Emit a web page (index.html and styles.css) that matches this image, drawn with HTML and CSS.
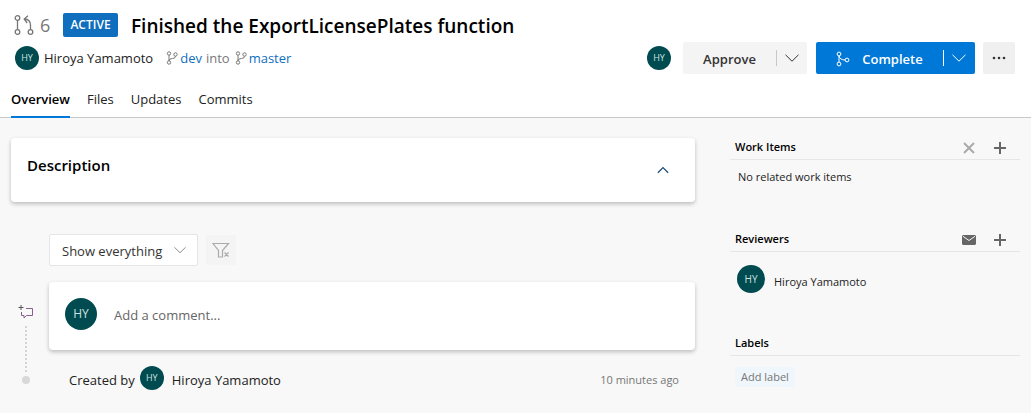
FILE: index.html
```html
<!DOCTYPE html>
<html lang="en">
<head>
<meta charset="utf-8">
<meta name="viewport" content="width=device-width, initial-scale=1">
<title>Pull request 6</title>
<link rel="stylesheet" href="styles.css">
</head>
<body>
<svg class="sprite" aria-hidden="true">
  <symbol id="chevron-down" viewBox="0 0 14 8"><path d="M.5 .8 7 7.2 13.5 .8"/></symbol>
  <symbol id="branch" viewBox="0 0 12 14"><circle cx="3" cy="2.5" r="1.7"/><circle cx="3" cy="11.5" r="1.7"/><circle cx="9.500" cy="3.5" r="1.7"/><path d="M3 4.200v5.600M9.500 5.200Q9.500 7.500 6.500 7.500 3 7.500 3 10"/></symbol>
  <symbol id="plus" viewBox="0 0 12 12"><path d="M6 0v12M0 6h12"/></symbol>
</svg>
<header class="header">
  <div class="header-main">
    <div class="summary">
      <div class="title-row">
        <svg class="icon pr-icon" viewBox="0 0 20 20"><circle cx="3.5" cy="3" r="2.3"/><circle cx="3.5" cy="17" r="2.3"/><circle cx="16.5" cy="17" r="2.3"/><path d="M3.5 5.300v9.400M16.500 14.700V10Q16.500 4.500 10.500 4M14 .8 10.200 4l3 4"/></svg>
        <span class="pr-number">6</span>
        <span class="status">ACTIVE</span>
        <h1 class="title">Finished the ExportLicensePlates function</h1>
      </div>
      <div class="byline">
        <span class="avatar avatar-small">HY</span>
        <span class="author">Hiroya Yamamoto</span>
        <span class="branches"><svg class="icon branch-icon"><use href="#branch"/></svg><a href="#dev">dev</a><span class="into">into</span><svg class="icon branch-icon"><use href="#branch"/></svg><a href="#master">master</a></span>
      </div>
    </div>
    <div class="actions">
      <span class="avatar avatar-small">HY</span>
      <div class="split">
        <button class="split-label" type="button">Approve</button>
        <button class="split-arrow" type="button" aria-label="More approval options"><svg class="icon chevron"><use href="#chevron-down"/></svg></button>
      </div>
      <div class="split split-primary">
        <button class="split-label" type="button"><svg class="icon merge-icon" viewBox="0 0 14 16"><circle cx="3" cy="3" r="1.9"/><circle cx="3" cy="13" r="1.9"/><circle cx="11" cy="9" r="1.9"/><path d="M3 4.900v6.200M3 5Q4 9 9.100 9"/></svg>Complete</button>
        <button class="split-arrow" type="button" aria-label="More completion options"><svg class="icon chevron"><use href="#chevron-down"/></svg></button>
      </div>
      <button class="more" type="button" aria-label="More actions"><svg class="more-icon" viewBox="0 0 14 4"><circle cx="2" cy="2" r="1.3"/><circle cx="7" cy="2" r="1.3"/><circle cx="12" cy="2" r="1.3"/></svg></button>
    </div>
  </div>
  <nav class="tabs">
    <a class="tab tab-active" href="#overview">Overview</a>
    <a class="tab" href="#files">Files</a>
    <a class="tab" href="#updates">Updates</a>
    <a class="tab" href="#commits">Commits</a>
  </nav>
</header>
<div class="content">
  <main class="main">
    <section class="card description">
      <h2 class="description-title">Description</h2>
      <button class="plain collapse" type="button" aria-label="Collapse description"><svg class="icon" viewBox="0 0 14 8"><path d="M1 7.2 7 1.2 13 7.2"/></svg></button>
    </section>
    <div class="filters">
      <label class="filter"><select class="filter-select" aria-label="Filter activity"><option>Show everything</option></select><svg class="icon filter-chevron"><use href="#chevron-down"/></svg></label>
      <button class="clear-filter" type="button" aria-label="Clear filter" disabled><svg class="icon clear-icon" viewBox="0 0 18 16"><path d="M1 1.5h15.5L10.5 8.5V15h-4V8.5zM12.500 10.500l4 4M16.500 10.500l-4 4"/></svg></button>
    </div>
    <div class="timeline">
      <div class="rail">
        <svg class="icon comment-icon" viewBox="0 0 16 14"><path class="comment-plus" d="M3 0v5M.5 2.5h5"/><path d="M8 3.500h6.500v7H8.500L6 13v-2.500H3.500V7"/></svg>
        <span class="rail-line"></span>
        <span class="rail-dot"></span>
      </div>
      <div class="events">
        <div class="card comment">
          <span class="avatar avatar-large">HY</span>
          <input class="comment-input" type="text" placeholder="Add a comment..." aria-label="Add a comment">
        </div>
        <div class="created">
          <span>Created by</span>
          <span class="avatar avatar-small created-avatar">HY</span>
          <span>Hiroya Yamamoto</span>
          <time class="time">10 minutes ago</time>
        </div>
      </div>
    </div>
  </main>
  <aside class="sidebar">
    <section class="panel">
      <div class="panel-head">
        <h3 class="panel-title">Work Items</h3>
        <button class="plain" type="button" aria-label="Remove work items"><svg class="icon remove-icon" viewBox="0 0 12 12"><path d="m1 1 10 10M11 1 1 11"/></svg></button>
        <button class="plain" type="button" aria-label="Add work item"><svg class="icon plus-icon"><use href="#plus"/></svg></button>
      </div>
      <p class="panel-text">No related work items</p>
    </section>
    <section class="panel panel-reviewers">
      <div class="panel-head">
        <h3 class="panel-title">Reviewers</h3>
        <button class="plain" type="button" aria-label="Email reviewers"><svg class="mail-icon" viewBox="0 0 14 10"><path d="M1 0h12l1 1v8l-1 1H1L0 9V1z"/><path class="mail-flap" d="M1 1.300 7 5.500l6-4.200"/></svg></button>
        <button class="plain" type="button" aria-label="Add reviewer"><svg class="icon plus-icon"><use href="#plus"/></svg></button>
      </div>
      <div class="reviewer"><span class="avatar avatar-medium">HY</span><span class="reviewer-name">Hiroya Yamamoto</span></div>
    </section>
    <section class="panel-labels">
      <div class="panel-head"><h3 class="panel-title">Labels</h3></div>
      <button class="add-label" type="button">Add label</button>
    </section>
  </aside>
</div>
</body>
</html>
```
FILE: styles.css
```css
* { box-sizing: border-box; }
html { background: #f8f8f8; }
body { margin: 0; font: 13px/20px "Segoe UI", "Open Sans", sans-serif; color: #222; }
h1, h2, h3, p { margin: 0; font-weight: 600; color: #000; }
a { color: #106ebe; text-decoration: none; }
button { font: inherit; border: 0; padding: 0; cursor: pointer; }
svg { display: block; flex: none; }
.sprite { position: absolute; width: 0; height: 0; }
.icon { fill: none; stroke: currentColor; }

.header { background: #fff; border-bottom: 1px solid #c8c8c8; padding: 11px 16px 0 11px; }
.header-main { display: flex; justify-content: space-between; align-items: flex-end; }
.title-row { display: flex; align-items: center; height: 28px; }
.pr-icon { width: 20px; height: 20px; margin: 0 6px 0 3px; color: #777; stroke-width: 1.3; }
.pr-number { width: 12px; margin-right: 11px; font-size: 18px; color: #777; }
.status { width: 55px; height: 24px; margin-right: 13px; border-radius: 2px; background: #106ebe; color: #fff; font-size: 12px; font-weight: 600; line-height: 24px; text-align: center; }
.title { font-size: 19px; font-weight: 550; line-height: 28px; padding-top: 1px; }
.byline { display: flex; align-items: center; height: 28px; margin-top: 5px; padding-left: 4px; }
.author { margin: 0 13px 0 5px; }
.branches { display: flex; align-items: center; }
.branch-icon { width: 12px; height: 14px; margin-right: 2px; color: #777; }
.into { margin: 0 5px 0 4px; color: #777; }

.avatar { flex: none; border-radius: 50%; background: #004b50; color: #cfe0e0; text-align: center; }
.avatar-small { width: 24px; height: 24px; font-size: 9px; line-height: 24px; }
.avatar-medium { width: 28px; height: 28px; font-size: 10px; line-height: 28px; }
.avatar-large { width: 32px; height: 32px; font-size: 12px; line-height: 32px; }

.actions { display: flex; align-items: center; height: 32px; margin-bottom: -2px; }
.split { display: flex; align-items: center; height: 32px; margin-left: 12px; border-radius: 2px; background: #f4f4f4; color: #333; }
.split-label { display: flex; align-items: center; justify-content: center; width: 93px; height: 32px; padding-top: 1px; background: transparent; color: inherit; font-size: 13px; font-weight: 600; }
.split-arrow { width: 31px; height: 16px; padding-left: 8px; background: transparent; color: inherit; border-left: 1px solid #c8c8c8; }
.chevron { width: 14px; height: 8px; }
.split-primary { margin-left: 9px; background: #0078d7; color: #fff; }
.split-primary .split-label { width: 127px; }
.split-primary .split-arrow { width: 32px; border-color: #fff; }
.merge-icon { width: 14px; height: 16px; margin-right: 12px; }
.more { display: grid; place-items: center; width: 32px; height: 32px; margin-left: 8px; border-radius: 2px; background: #f0f0f0; }
.more-icon { width: 14px; height: 4px; fill: #333; }

.tabs { display: flex; gap: 17px; margin: 15px 0 -1px; }
.tab { height: 31px; padding-top: 2px; color: #222; border-bottom: 2px solid transparent; }
.tab-active { color: #000; font-weight: 600; border-color: #0078d7; }

.content { display: grid; grid-template-columns: minmax(0, 684fr) minmax(0, 290fr); column-gap: 35px; padding: 20px 11px 8px; }
.card { border-radius: 4px; background: #fff; box-shadow: 0 2px 4px rgba(0, 0, 0, .24); }
.description { display: flex; justify-content: space-between; align-items: flex-start; min-height: 64px; padding: 17px 26px 17px 16px; }
.description-title { font-size: 15px; line-height: 20px; }
.plain { background: transparent; color: #666; }
.collapse { width: 12px; margin-top: 11px; color: #1c4d78; }
.collapse .icon { width: 12px; height: 8px; stroke-width: 1.5; }
.filters { display: flex; gap: 8px; margin: 32px 0 16px 38px; }
.filter { display: grid; align-items: center; width: 149px; height: 32px; }
.filter-select { grid-area: 1 / 1; width: 100%; height: 32px; padding: 1px 12px 0; appearance: none; border: 1px solid #e5e5e5; border-radius: 2px; background: #fff; font: inherit; color: #333; }
.filter-chevron { grid-area: 1 / 1; justify-self: end; width: 12px; height: 8px; margin-right: 12px; color: #777; pointer-events: none; }
.clear-filter { display: grid; place-items: center; width: 30px; height: 30px; margin-top: 1px; background: #f4f4f4; color: #aaa; }
.clear-icon { width: 18px; height: 16px; stroke-width: 1.2; }
.timeline { display: grid; grid-template-columns: 30px minmax(0, 1fr); column-gap: 8px; }
.rail { display: flex; flex-direction: column; align-items: center; padding-top: 23px; }
.comment-icon { width: 16px; height: 14px; color: #86608e; }
.comment-plus { stroke: #555; }
.rail-line { height: 46px; margin: 7px 0 4px; border-left: 2px dotted #d4d4d4; }
.rail-dot { width: 8px; height: 8px; border-radius: 50%; background: #d8d8d8; }
.comment { display: flex; align-items: flex-start; gap: 17px; min-height: 68px; padding: 16px; }
.comment-input { flex: 1; min-width: 0; height: 34px; border: 0; padding: 0; background: transparent; font: inherit; }
.comment-input::placeholder { color: #666; opacity: 1; }
.created { display: flex; align-items: flex-end; margin-top: 16px; padding: 0 16px 0 20px; }
.created-avatar { margin: 0 8px 0 5px; }
.time { margin-left: auto; color: #777; font-size: 11px; }

.sidebar { font-size: 11px; padding-top: 1px; }
.panel { min-height: 92px; }
.panel-reviewers { min-height: 104px; }
.panel-head { display: flex; align-items: center; gap: 18px; height: 21px; padding: 0 14px 2px 5px; border-bottom: 1px solid #e6e6e6; }
.panel-title { flex: 1; padding-bottom: 2px; font-size: 11px; line-height: 16px; }
.remove-icon { width: 12px; height: 12px; margin-right: 1px; color: #aaa; stroke-width: 2; }
.plus-icon { width: 12px; height: 12px; stroke-width: 2; }
.mail-icon { width: 14px; height: 10px; fill: #666; }
.mail-flap { fill: none; stroke: #f8f8f8; }
.panel-text { padding: 7px 8px; font-weight: 400; color: #222; }
.reviewer { display: flex; align-items: flex-end; gap: 9px; padding: 13px 7px; }
.reviewer-name { line-height: 22px; }
.add-label { height: 20px; margin: 11px 0 0 5px; padding: 0 6px; background: #eff6fc; color: #777; }
```
